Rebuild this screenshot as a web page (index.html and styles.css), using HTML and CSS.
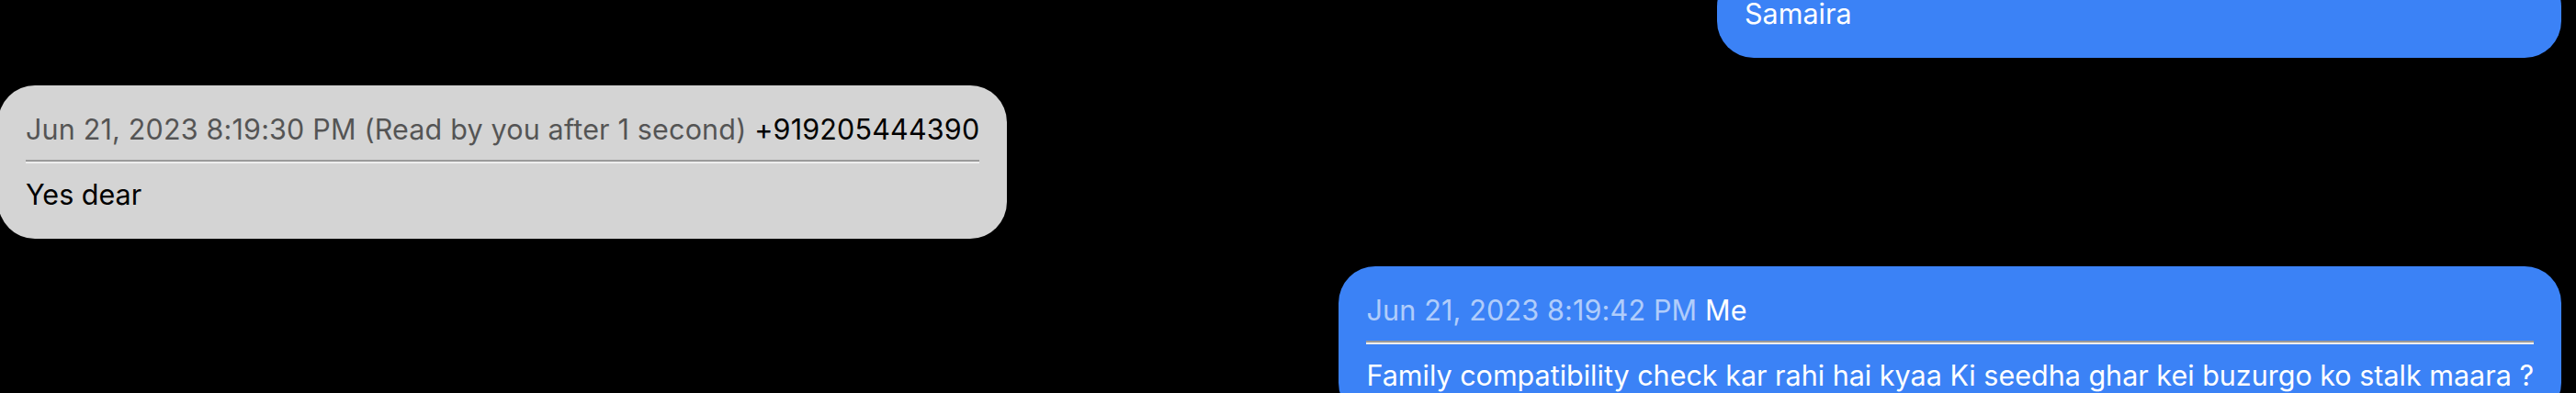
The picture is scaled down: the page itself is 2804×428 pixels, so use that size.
FILE: index.html
```html
<!DOCTYPE html>
<html lang="en">
<head>
<meta charset="utf-8">
<title>Messages</title>
<link rel="stylesheet" href="styles.css">
</head>
<body>
  <div class="thread">
    <div class="msg sent partial">
      <div class="body">Samaira</div>
    </div>
    <div class="msg received">
      <div class="meta"><span class="time">Jun 21, 2023 8:19:30 PM (Read by you after 1 second)</span> <span class="who">+919205444390</span></div>
      <hr class="rule">
      <div class="body">Yes dear</div>
    </div>
    <div class="msg sent">
      <div class="meta"><span class="time">Jun 21, 2023 8:19:42 PM</span> <span class="who">Me</span></div>
      <hr class="rule">
      <div class="body">Family compatibility check kar rahi hai kyaa Ki seedha ghar kei buzurgo ko stalk maara ?</div>
    </div>
  </div>
</body>
</html>
```

FILE: styles.css
```css
html, body {
  margin: 0;
  padding: 0;
  background: #000;
  overflow: hidden;
}

body {
  font-family: Inter, "Liberation Sans", sans-serif;
  font-size: 30.5px;
  line-height: 35.5px;
}

.thread {
  display: flex;
  flex-direction: column;
  gap: 30px;
  margin-top: -33px;
  margin-left: -2px;
  padding-right: 16px;
}

.msg {
  padding: 30px;
  border-radius: 40px;
  max-width: 90%;
}

.sent {
  align-self: flex-end;
  background: #3b82f6;
  color: #fff;
}

.received {
  align-self: flex-start;
  background: #d4d4d4;
  color: #000;
}

.partial {
  width: 859px;
}

.meta {
  letter-spacing: 0.17px;
}

.time {
  opacity: 0.6;
}

.rule {
  height: 0;
  margin: 16px 0;
  border: 0;
  border-top: 2px solid #9a9a9a;
  border-bottom: 2px solid #eeeeee;
}
```
